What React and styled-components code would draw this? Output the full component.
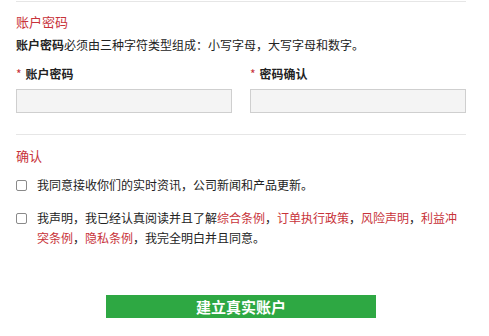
import React from "react";
import styled, { createGlobalStyle } from "styled-components";

const Global = createGlobalStyle`
  html, body { margin: 0; padding: 0; background: #fff; }
  body { font-family: "Noto Sans CJK SC", "Microsoft YaHei", sans-serif; color: #222; }
`;

const Page = styled.div`
  width: 489px;
  padding: 1px 23px 0 16px;
  box-sizing: border-box;
`;

const Rule = styled.div`
  height: 1px;
  background: #e6e6e6;
`;

const Section = styled.section`
  padding: ${(p) => p.$pad || "0"};
`;

const Heading = styled.h3`
  margin: 0;
  font-size: 13px;
  font-weight: normal;
  color: #c8333a;
  line-height: 18px;
`;

const Desc = styled.p`
  margin: 5px 0 0;
  font-size: 12px;
  line-height: 18px;
  b { font-weight: bold; }
`;

const Fields = styled.div`
  display: grid;
  grid-template-columns: 1fr 1fr;
  column-gap: 18px;
  margin-top: 12px;
`;

const Field = styled.div`
  display: flex;
  flex-direction: column;
`;

const Label = styled.label`
  font-size: 12px;
  font-weight: bold;
  line-height: 16px;
  span { color: #c8333a; font-weight: normal; margin-right: 4px; }
`;

const Input = styled.input`
  margin-top: 7px;
  height: 24px;
  box-sizing: border-box;
  border: 1px solid #cfcfcf;
  background: #f4f4f4;
  outline: none;
`;

const Check = styled.label`
  display: flex;
  align-items: flex-start;
  gap: 10px;
  font-size: 12px;
  line-height: 20px;
  margin-top: ${(p) => p.$mt || "0"};
`;

const Box = styled.input.attrs({ type: "checkbox" })`
  appearance: none;
  flex: none;
  width: 11px;
  height: 11px;
  margin: 5px 0 0;
  border: 1px solid #8a8a8a;
  border-radius: 2px;
  background: #fff;
`;

const Link = styled.a`
  color: #c8333a;
  text-decoration: none;
`;

const ButtonRow = styled.div`
  display: flex;
  justify-content: center;
  padding: 47px 0 0;
`;

const Button = styled.button`
  width: 270px;
  height: 23px;
  border: none;
  background: #2ea843;
  color: #fff;
  font-family: inherit;
  font-size: 15px;
  font-weight: bold;
  line-height: 23px;
  padding: 0;
`;

export default function App() {
  return (
    <Page>
      <Global />
      <Rule />
      <Section $pad="11px 0 21px">
        <Heading>账户密码</Heading>
        <Desc>
          <b>账户密码</b>必须由三种字符类型组成：小写字母，大写字母和数字。
        </Desc>
        <Fields>
          <Field>
            <Label><span>*</span>账户密码</Label>
            <Input type="password" />
          </Field>
          <Field>
            <Label><span>*</span>密码确认</Label>
            <Input type="password" />
          </Field>
        </Fields>
      </Section>
      <Rule />
      <Section $pad="12px 0 0">
        <Heading>确认</Heading>
        <Check $mt="10px">
          <Box />
          <span>我同意接收你们的实时资讯，公司新闻和产品更新。</span>
        </Check>
        <Check $mt="13px">
          <Box />
          <span>
            我声明，我已经认真阅读并且了解<Link>综合条例</Link>，<Link>订单执行政策</Link>，<Link>风险声明</Link>，<Link>利益冲突条例</Link>，<Link>隐私条例</Link>，我完全明白并且同意。
          </span>
        </Check>
      </Section>
      <ButtonRow>
        <Button>建立真实账户</Button>
      </ButtonRow>
    </Page>
  );
}
